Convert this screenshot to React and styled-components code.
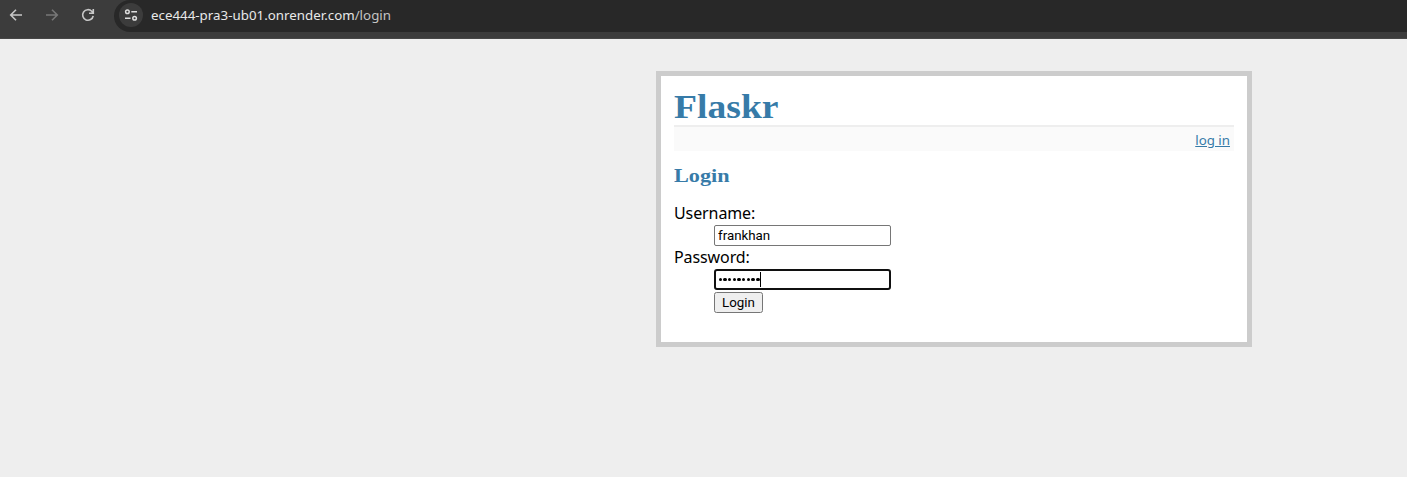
import React from "react";
import styled, { createGlobalStyle } from "styled-components";

const GlobalStyle = createGlobalStyle`
  *, *::before, *::after { box-sizing: border-box; }
  html { background: #eee; }
  body { margin: 0; background: #eee; color: #000; font: 16px/22px "Noto Sans", sans-serif; }
`;

const Toolbar = styled.header`
  display: flex;
  align-items: flex-start;
  height: 39px;
  background: #3c3c3c;
  border-bottom: 1px solid #474747;
`;

const NavButtons = styled.nav`
  display: flex;
  gap: 20px;
  width: 114px;
  padding: 7px 0 0 8px;
`;

const NavIcon = styled.svg`
  display: block;
  width: 16px;
  height: 16px;
  fill: none;
  stroke: ${(p) => (p.$muted ? "#777" : "#c7c7c7")};
  stroke-width: 1.6;
`;

const AddressBar = styled.div`
  display: flex;
  flex: 1;
  height: 32px;
  padding-left: 5px;
  background: #282828;
  border-radius: 16px 0 0 16px;
`;

const SiteInfo = styled.span`
  display: flex;
  align-items: center;
  justify-content: center;
  width: 24px;
  height: 24px;
  margin-top: 3px;
  border-radius: 50%;
  background: #3c3c3c;
`;

const Address = styled.span`
  margin-left: 8px;
  font-size: 13.3px;
  line-height: 31px;
  letter-spacing: ${(p) => p.$tracking}px;
  color: #e8e8e8;
  white-space: nowrap;
`;

const Path = styled.span`
  color: #c4c4c4;
`;

const Page = styled.main`
  width: 596px;
  height: 276px;
  margin: 32px 0 0 656px;
  padding: 13px;
  border: 5px solid #ccc;
  background: #fff;
`;

const Heading = styled.h1`
  height: 38px;
  margin: 0;
  border-bottom: 2px solid #eee;
  color: #377ba8;
  font: bold 33px/36px "Liberation Serif", serif;
`;

const Subheading = styled.h2`
  margin: 13px 0 14px;
  color: #377ba8;
  font: bold 19.5px/24px "Liberation Serif", serif;
`;

const Wide = styled.span`
  display: inline-block;
  margin-left: 0.4px;
  transform: scaleX(${(p) => p.$scale});
  transform-origin: left;
`;

const MetaNav = styled.div`
  height: 24px;
  padding: 2px 4px 0 0;
  background: #fafafa;
  text-align: right;
  font-size: 13.3px;
`;

const Link = styled.a`
  color: #377ba8;
  text-decoration: underline;
`;

const Fields = styled.dl`
  margin: 0;
`;

const Label = styled.dt`
  height: 22px;
  line-height: 22px;
  letter-spacing: -0.1px;
`;

const Field = styled.dd`
  display: flex;
  height: 22px;
  margin: 0 0 0 40px;
`;

const inputFont = `13.333px Roboto, sans-serif`;

const Input = styled.input`
  width: 177px;
  height: 21px;
  margin: 1px 0 0;
  padding: 0 3px;
  border: 1px solid #767676;
  border-radius: 2px;
  background: #fff;
  color: #000;
  font: ${inputFont};
  outline: none;
`;

const PasswordBox = styled.div`
  display: flex;
  align-items: center;
  width: 177px;
  height: 21px;
  margin-top: 1px;
  padding-left: 2.5px;
  border: 2px solid #101010;
  border-radius: 3px;
  background: #fff;
`;

const Dots = styled.span`
  display: flex;
  gap: 1.2px;
`;

const Dot = styled.i`
  width: 3.5px;
  height: 3.5px;
  border-radius: 50%;
  background: #000;
`;

const Caret = styled.i`
  width: 1px;
  height: 15px;
  background: #000;
`;

const Button = styled.button`
  width: 49px;
  height: 21px;
  margin-top: 2px;
  padding: 0;
  border: 1px solid #767676;
  border-radius: 2.5px;
  background: #efefef;
  color: #000;
  font: ${inputFont};
`;

export default function App() {
  return (
    <>
      <GlobalStyle />
      <Toolbar>
        <NavButtons>
          <NavIcon viewBox="0 0 16 16"><path d="M14 8H3M8 2.7 2.7 8 8 13.3" /></NavIcon>
          <NavIcon $muted viewBox="0 0 16 16"><path d="M2 8h11M8 2.7 13.3 8 8 13.3" /></NavIcon>
          <NavIcon viewBox="0 0 16 16"><path d="M13.2 8.8a5.3 5.3 0 1 1-1.4-4.5L13.2 6M13.3 2v4.3H9" /></NavIcon>
        </NavButtons>
        <AddressBar>
          <SiteInfo>
            <svg width="14" height="14" viewBox="0 0 14 14" fill="none" stroke="#dedede" strokeWidth="1.5">
              <circle cx="3.4" cy="3.8" r="1.8" />
              <path d="M7.3 3.8H13M1 10.2h5.5" />
              <circle cx="10.6" cy="10.2" r="1.8" />
            </svg>
          </SiteInfo>
          <Address $tracking={0.02}>ece444-pra3-ub01.onrender.com<Path>/login</Path></Address>
        </AddressBar>
      </Toolbar>
      <Page>
        <Heading><Wide $scale={1.14}>Flaskr</Wide></Heading>
        <MetaNav><Link>log in</Link></MetaNav>
        <Subheading><Wide $scale={1.14}>Login</Wide></Subheading>
        <Fields>
          <Label>Username:</Label>
          <Field><Input defaultValue="frankhan" /></Field>
          <Label>Password:</Label>
          <Field>
            <PasswordBox>
              <Dots>{Array.from({ length: 9 }, (_, i) => <Dot key={i} />)}</Dots>
              <Caret />
            </PasswordBox>
          </Field>
          <Field><Button>Login</Button></Field>
        </Fields>
      </Page>
    </>
  );
}
